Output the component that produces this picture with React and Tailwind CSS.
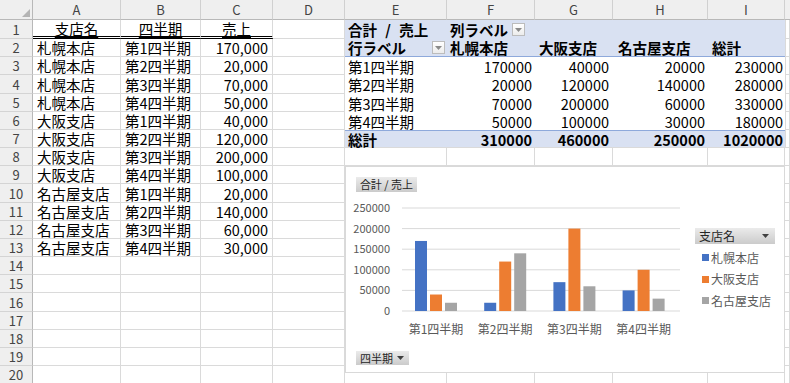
import React from "react";

const FONT = "font-['Noto_Sans_CJK_JP','Noto_Sans_CJK_SC',sans-serif]";

const COLS = [
  { key: "A", w: "w-[88px]" },
  { key: "B", w: "w-[80px]" },
  { key: "C", w: "w-[72px]" },
  { key: "D", w: "w-[72px]" },
  { key: "E", w: "w-[102px]" },
  { key: "F", w: "w-[88px]" },
  { key: "G", w: "w-[78px]" },
  { key: "H", w: "w-[95px]" },
  { key: "I", w: "w-[77px]" },
];

const ROW_H = [
  "h-[19px]", "h-[18px]", "h-[18px]", "h-[19px]", "h-[18px]",
  "h-[18px]", "h-[18px]", "h-[18px]", "h-[18px]", "h-[19px]",
  "h-[18px]", "h-[18px]", "h-[18px]", "h-[18px]", "h-[18px]",
  "h-[19px]", "h-[18px]", "h-[18px]", "h-[18px]", "h-[18px]",
];

const sales = [
  ["札幌本店", "第1四半期", "170,000"],
  ["札幌本店", "第2四半期", "20,000"],
  ["札幌本店", "第3四半期", "70,000"],
  ["札幌本店", "第4四半期", "50,000"],
  ["大阪支店", "第1四半期", "40,000"],
  ["大阪支店", "第2四半期", "120,000"],
  ["大阪支店", "第3四半期", "200,000"],
  ["大阪支店", "第4四半期", "100,000"],
  ["名古屋支店", "第1四半期", "20,000"],
  ["名古屋支店", "第2四半期", "140,000"],
  ["名古屋支店", "第3四半期", "60,000"],
  ["名古屋支店", "第4四半期", "30,000"],
];

const pivotRows = [
  ["第1四半期", 170000, 40000, 20000, 230000],
  ["第2四半期", 20000, 120000, 140000, 280000],
  ["第3四半期", 70000, 200000, 60000, 330000],
  ["第4四半期", 50000, 100000, 30000, 180000],
];

const series = [
  { name: "札幌本店", color: "#4472c4", values: [170000, 20000, 70000, 50000] },
  { name: "大阪支店", color: "#ed7d31", values: [40000, 120000, 200000, 100000] },
  { name: "名古屋支店", color: "#a5a5a5", values: [20000, 140000, 60000, 30000] },
];

const grid = "border-r border-b border-[#dadada]";

const DropButton = () => (
  <div className="w-[13px] h-[13px] shrink-0 border border-[#bcbcbc] bg-gradient-to-b from-[#ffffff] to-[#ececec] flex items-center justify-center">
    <svg width="7" height="4" viewBox="0 0 7 4">
      <path d="M0 0 L7 0 L3.5 4 Z" fill="#8a8a8a" />
    </svg>
  </div>
);

const Cell = ({ w, className = "", children }) => (
  <div className={`${w} shrink-0 h-full flex items-center whitespace-nowrap ${className}`}>
    {children}
  </div>
);

function leftCells(r) {
  const [a, b, c] = COLS;
  if (r === 1) {
    const head = "border-r border-r-[#dadada] border-b-[3px] border-double border-b-black justify-center";
    return [
      <Cell key="A" w={a.w} className={head}><span className="underline underline-offset-2">支店名</span></Cell>,
      <Cell key="B" w={b.w} className={head}><span className="underline underline-offset-2">四半期</span></Cell>,
      <Cell key="C" w={c.w} className={head}><span className="underline underline-offset-2">売上</span></Cell>,
    ];
  }
  const row = sales[r - 2];
  return [
    <Cell key="A" w={a.w} className={`${grid} pl-[4px]`}>{row ? row[0] : ""}</Cell>,
    <Cell key="B" w={b.w} className={`${grid} pl-[4px]`}>{row ? row[1] : ""}</Cell>,
    <Cell key="C" w={c.w} className={`${grid} justify-end pr-[4px]`}>{row ? row[2] : ""}</Cell>,
  ];
}

function pivotCells(r) {
  const [, , , , e, f, g, h, i] = COLS;
  if (r === 1) {
    const bg = "bg-[#d9e1f2] font-bold";
    return [
      <Cell key="E" w={e.w} className={`${bg} pl-[3px]`}>
        <span className="[word-spacing:5px]">合計 / 売上</span>
      </Cell>,
      <Cell key="F" w={f.w} className={`${bg} pl-[3px] gap-[4px]`}>
        <span>列ラベル</span>
        <DropButton />
      </Cell>,
      <Cell key="G" w={g.w} className={bg} />,
      <Cell key="H" w={h.w} className={bg} />,
      <Cell key="I" w={i.w} className={bg} />,
    ];
  }
  if (r === 2) {
    const bg = "bg-[#d9e1f2] font-bold border-b border-[#8ea9db]";
    return [
      <Cell key="E" w={e.w} className={`${bg} pl-[3px] pr-[2px] justify-between`}>
        <span>行ラベル</span>
        <DropButton />
      </Cell>,
      <Cell key="F" w={f.w} className={`${bg} pl-[3px]`}>札幌本店</Cell>,
      <Cell key="G" w={g.w} className={`${bg} pl-[4px]`}>大阪支店</Cell>,
      <Cell key="H" w={h.w} className={`${bg} pl-[5px]`}>名古屋支店</Cell>,
      <Cell key="I" w={i.w} className={`${bg} pl-[4px]`}>総計</Cell>,
    ];
  }
  if (r >= 3 && r <= 6) {
    const row = pivotRows[r - 3];
    return [
      <Cell key="E" w={e.w} className="pl-[3px]">{row[0]}</Cell>,
      <Cell key="F" w={f.w} className="justify-end pr-[3px]">{row[1]}</Cell>,
      <Cell key="G" w={g.w} className="justify-end pr-[4px]">{row[2]}</Cell>,
      <Cell key="H" w={h.w} className="justify-end pr-[3px]">{row[3]}</Cell>,
      <Cell key="I" w={i.w} className="justify-end pr-[2px]">{row[4]}</Cell>,
    ];
  }
  const bg = "bg-[#d9e1f2] font-bold border-t border-t-[#8ea9db] border-b border-b-[#dadada]";
  return [
    <Cell key="E" w={e.w} className={`${bg} pl-[3px]`}>総計</Cell>,
    <Cell key="F" w={f.w} className={`${bg} justify-end pr-[3px]`}>310000</Cell>,
    <Cell key="G" w={g.w} className={`${bg} justify-end pr-[4px]`}>460000</Cell>,
    <Cell key="H" w={h.w} className={`${bg} justify-end pr-[3px]`}>250000</Cell>,
    <Cell key="I" w={i.w} className={`${bg} justify-end pr-[2px]`}>1020000</Cell>,
  ];
}

function SheetRow({ r }) {
  const rest = r <= 7
    ? pivotCells(r)
    : COLS.slice(4).map((c) => <Cell key={c.key} w={c.w} className={grid} />);
  return (
    <div className={`flex ${ROW_H[r - 1]}`}>
      <div className="w-[33px] shrink-0 h-full flex items-center justify-center bg-[#efefef] border-r border-r-[#b8b8b8] border-b border-b-[#d4d4d4] text-[#444] text-[13px]">
        {r}
      </div>
      {leftCells(r)}
      <Cell w={COLS[3].w} className={grid} />
      {rest}
      <div className={`flex-1 h-full ${r <= 7 ? "border-l border-l-[#dadada] " : ""}${grid}`} />
    </div>
  );
}

function PivotChart() {
  const top = 42;
  const step = 20.6;
  const base = top + step * 5;
  const scale = (step * 5) / 250000;
  const cats = ["第1四半期", "第2四半期", "第3四半期", "第4四半期"];
  return (
    <div className="absolute left-[345px] top-[166px] w-[440px] h-[207px] bg-white border border-[#d9d9d9]">
      <svg className="absolute left-0 top-0" width="438" height="205">
        <g transform="translate(-1,-1)">
          {[0, 1, 2, 3, 4, 5].map((k) => (
            <g key={k}>
              <line x1="57" x2="335" y1={top + k * step} y2={top + k * step} stroke="#d9d9d9" strokeWidth="1" />
              <text
                x="45"
                y={top + k * step + 4}
                textAnchor="end"
                fontSize="11"
                fill="#595959"
                fontFamily="'Noto Sans CJK JP', sans-serif"
              >
                {(250000 - k * 50000).toString()}
              </text>
            </g>
          ))}
          {cats.map((cat, c) => (
            <g key={cat}>
              {series.map((s, si) => {
                const hgt = s.values[c] * scale;
                return (
                  <rect
                    key={s.name}
                    x={70 + c * 69.2 + si * 15}
                    y={base - hgt}
                    width="12"
                    height={hgt}
                    fill={s.color}
                  />
                );
              })}
              <text
                x={70 + c * 69.2 + 21}
                y="168"
                textAnchor="middle"
                fontSize="12"
                fill="#595959"
                fontFamily="'Noto Sans CJK JP', sans-serif"
              >
                {cat}
              </text>
            </g>
          ))}
        </g>
      </svg>

      <div className="absolute left-[10px] top-[10px] w-[61px] h-[15px] bg-gradient-to-b from-[#ebebeb] to-[#cbcbcb] flex items-center justify-center text-[11px] leading-none text-[#262626] whitespace-nowrap">
        合計 / 売上
      </div>

      <div className="absolute left-[349px] top-[61px] w-[80px] flex flex-col">
        <div className="h-[16px] bg-gradient-to-b from-[#ebebeb] to-[#cbcbcb] flex items-center justify-between pl-[4px] pr-[6px] text-[12px] leading-none text-[#262626]">
          <span>支店名</span>
          <svg width="7" height="4" viewBox="0 0 7 4">
            <path d="M0 0 L7 0 L3.5 4 Z" fill="#404040" />
          </svg>
        </div>
        <div className="flex flex-col pt-[3px]">
          {series.map((s) => (
            <div key={s.name} className="h-[21.5px] flex items-center gap-[2px] pl-[7px] text-[12px] leading-none text-[#595959] whitespace-nowrap">
              <span className="w-[7px] h-[7px] shrink-0" style={{ backgroundColor: s.color }} />
              <span>{s.name}</span>
            </div>
          ))}
        </div>
      </div>

      <div className="absolute left-[10px] top-[184px] w-[53px] h-[14px] bg-gradient-to-b from-[#ebebeb] to-[#cbcbcb] flex items-center gap-[4px] pl-[4px] text-[11px] leading-none text-[#262626]">
        <span>四半期</span>
        <svg width="7" height="4" viewBox="0 0 7 4">
          <path d="M0 0 L7 0 L3.5 4 Z" fill="#404040" />
        </svg>
      </div>
    </div>
  );
}

export default function App() {
  return (
    <div className={`relative w-[790px] h-[383px] overflow-hidden bg-white text-black text-[14.5px] leading-[17px] ${FONT}`}>
      <div className="flex h-[20px]">
        <div className="relative w-[33px] shrink-0 bg-[#efefef] border-r border-b border-[#b8b8b8]">
          <svg className="absolute right-[2px] bottom-[2px]" width="8" height="8" viewBox="0 0 8 8">
            <path d="M8 0 L8 8 L0 8 Z" fill="#b4b4b4" />
          </svg>
        </div>
        {COLS.map((c) => (
          <div
            key={c.key}
            className={`${c.w} shrink-0 flex items-center justify-center bg-[#efefef] border-r border-r-[#d0d0d0] border-b border-b-[#b8b8b8] text-[13px] text-[#444]`}
          >
            {c.key}
          </div>
        ))}
        <div className="flex-1 bg-[#efefef] border-b border-[#b8b8b8]" />
      </div>
      {Array.from({ length: 20 }, (_, k) => (
        <SheetRow key={k} r={k + 1} />
      ))}
      <PivotChart />
    </div>
  );
}
